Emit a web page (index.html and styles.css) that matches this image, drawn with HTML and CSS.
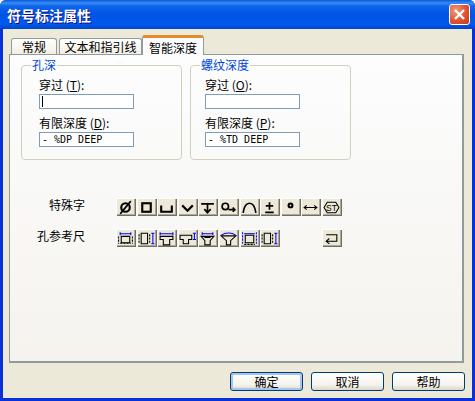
FILE: index.html
```html
<!DOCTYPE html>
<html lang="zh-CN">
<head>
    <meta charset="UTF-8">
    <meta name="viewport" content="width=device-width, initial-scale=1.0">
    <title>符号标注属性</title>
    <link rel="stylesheet" href="styles.css">
</head>
<body>
    <main class="window">
        <header class="titlebar">
            <h1 class="title">符号标注属性</h1>
            <button class="close-btn">
                <svg width="13" height="13" viewBox="0 0 13 13"><path d="M2 2L11 11M11 2L2 11"/></svg>
            </button>
        </header>

        <div class="client">
            <div class="tabs">
                <div class="tab tab-general">常规</div>
                <div class="tab tab-text">文本和指引线</div>
                <div class="tab tab-active">智能深度</div>
            </div>

            <section class="panel">
                <div class="groups">
                    <fieldset class="group">
                        <legend>孔深</legend>
                        <label class="field-label">穿过 (<u>T</u>):</label>
                        <div class="field"><span class="caret"></span></div>
                        <label class="field-label">有限深度 (<u>D</u>):</label>
                        <div class="field">- %DP DEEP</div>
                    </fieldset>
                    <fieldset class="group">
                        <legend>螺纹深度</legend>
                        <label class="field-label">穿过 (<u>O</u>):</label>
                        <div class="field"></div>
                        <label class="field-label">有限深度 (<u>P</u>):</label>
                        <div class="field">- %TD DEEP</div>
                    </fieldset>
                </div>

                <div class="symbols">
                    <div class="symbol-row">
                        <span class="row-label row-label-short">特殊字</span>
                        <div class="icon-row">
                            <button class="icon-btn"><svg viewBox="0 0 16 14"><circle class="ink" cx="8" cy="7" r="4"/><path class="ink thin" d="M3 13L13 1"/></svg></button>
                            <button class="icon-btn"><svg viewBox="0 0 16 14"><rect class="ink" x="4" y="3" width="8" height="8"/></svg></button>
                            <button class="icon-btn"><svg viewBox="0 0 16 14"><path class="ink" d="M3 5V11H13V5"/></svg></button>
                            <button class="icon-btn"><svg viewBox="0 0 16 14"><path class="ink" d="M3 5L8 10L13 5"/></svg></button>
                            <button class="icon-btn"><svg viewBox="0 0 16 14"><path class="ink thin" d="M2 3.500H14M8 3.500V12M5 8.500L8 12L11 8.500"/></svg></button>
                            <button class="icon-btn"><svg viewBox="0 0 16 14"><circle class="ink thin" cx="5" cy="6" r="3"/><path class="ink thin" d="M8 9H14M12 7L14 9L12 11"/></svg></button>
                            <button class="icon-btn"><svg viewBox="0 0 16 14"><path class="ink thin" d="M2 12C3 5 6 3 8 3C10 3 13 5 14 12"/></svg></button>
                            <button class="icon-btn"><svg viewBox="0 0 16 14"><path class="ink thin" d="M8 2V9M4.500 5.500H11.500M4 11.500H12"/></svg></button>
                            <button class="icon-btn"><svg viewBox="0 0 16 14"><circle class="ink" cx="8" cy="5" r="1.800"/></svg></button>
                            <button class="icon-btn"><svg viewBox="0 0 16 14"><path class="ink hair" d="M2 7H14M4.500 5L2 7L4.500 9M11.500 5L14 7L11.500 9"/></svg></button>
                            <button class="icon-btn"><svg viewBox="0 0 16 14"><path class="ink hair" d="M4 2H12L15 7L12 12H4L1 7Z"/><text class="icon-text" x="8" y="10">ST</text></svg></button>
                        </div>
                    </div>
                    <div class="symbol-row">
                        <span class="row-label">孔参考尺</span>
                        <div class="icon-row">
                            <button class="icon-btn"><svg viewBox="0 0 16 14"><path class="dim" d="M3 1V4M13 1V4M3 2.500H13"/><path class="ink hair dash" d="M1.500 5V12M14.500 5V12M3 11.500H13"/><path class="ink hair" d="M4 5H12V11H4Z"/></svg></button>
                            <button class="icon-btn"><svg viewBox="0 0 16 14"><path class="dim" d="M14 2V12M12.500 2H15.500M12.500 12H15.500"/><path class="ink hair dash" d="M1 3V11M11 3V11"/><path class="ink hair" d="M3 2H9V12H3Z"/></svg></button>
                            <button class="icon-btn"><svg viewBox="0 0 16 14"><path class="dim" d="M2 1V4M14 1V4M2 2.500H14"/><path class="ink hair" d="M2 5H14V8H11V13H5V8H2Z"/></svg></button>
                            <button class="icon-btn"><svg viewBox="0 0 16 14"><path class="dim" d="M14.500 2V8M13 2H16M13 8H16"/><path class="ink hair" d="M1 4H12V8H9V12H4V8H1Z"/></svg></button>
                            <button class="icon-btn"><svg viewBox="0 0 16 14"><path class="dim" d="M3 1V4M13 1V4M3 2.500H13"/><path class="ink hair" d="M2 5H14L10.500 9V13H5.500V9Z"/><path class="ink hair" d="M5 6H11"/></svg></button>
                            <button class="icon-btn"><svg viewBox="0 0 16 14"><path class="dim" d="M1 4C5 1 11 1 15 4"/><path class="ink hair" d="M1 4.500H15L10 9V13H6V9Z"/></svg></button>
                            <button class="icon-btn"><svg viewBox="0 0 16 14"><path class="dim dash" d="M1.500 1V13M14.500 1V13"/><path class="dim" d="M3 2.500H13"/><path class="ink hair" d="M4 4H12V11H4Z"/><path class="ink hair dash" d="M3 12.500H13"/></svg></button>
                            <button class="icon-btn"><svg viewBox="0 0 16 14"><path class="dim" d="M14 2V12M12.500 2H15.500M12.500 12H15.500"/><path class="ink hair dash" d="M1 3V11M11 3V11"/><path class="ink hair" d="M3 2H9V12H3Z"/></svg></button>
                        </div>
                        <button class="icon-btn return-btn"><svg viewBox="0 0 16 14"><path class="ink hair" d="M3 3.500H13V9.500H3M6 7L3 9.500L6 12"/></svg></button>
                    </div>
                </div>
            </section>

            <footer class="actions">
                <button class="btn btn-default">确定</button>
                <button class="btn">取消</button>
                <button class="btn">帮助</button>
            </footer>
        </div>
    </main>
</body>
</html>
```

FILE: styles.css
```css
* {
    box-sizing: border-box;
}

body {
    margin: 0;
    width: 475px;
    height: 401px;
    overflow: hidden;
    font-family: "Noto Sans CJK SC", "Liberation Sans", sans-serif;
    font-size: 12px;
    color: #000;
}

.window {
    display: flex;
    flex-direction: column;
    height: 401px;
    background: #0831d9;
    border-radius: 6px 6px 0 0;
}

.titlebar {
    display: flex;
    align-items: center;
    justify-content: space-between;
    height: 29px;
    padding: 0 5px 0 7px;
    border-radius: 6px 6px 0 0;
    background: linear-gradient(#0a58dc 0, #3a8cf3 3px, #0f66ea 6px, #0054e3 14px, #0058ee 24px, #0046c8 29px);
}

.title {
    margin: 0;
    font-size: 14px;
    font-weight: bold;
    line-height: 18px;
    color: #fff;
    text-shadow: 1px 1px 0 #0f1089;
}

.close-btn {
    display: flex;
    align-items: center;
    justify-content: center;
    width: 21px;
    height: 21px;
    padding: 0;
    border: 1px solid #fff;
    border-radius: 3px;
    background: radial-gradient(circle at 30% 30%, #ef9b7d, #e2532e 55%, #c23a14);
}

.close-btn path {
    fill: none;
    stroke: #fff;
    stroke-width: 2.4;
}

.client {
    flex: 1;
    margin: 0 3px 3px 3px;
    padding: 6px 8px 0 6px;
    background: #ece9d8;
}

.tabs {
    display: flex;
    align-items: flex-end;
    height: 20px;
    padding-left: 2px;
    position: relative;
    z-index: 1;
    margin-bottom: -1px;
}

.tab {
    height: 16px;
    line-height: 15px;
    text-align: center;
    border: 1px solid #919b9c;
    border-bottom: 0;
    border-radius: 3px 3px 0 0;
    background: linear-gradient(#fff, #f1efe4);
    margin-bottom: 1px;
}

.tab-general {
    width: 46px;
    margin-right: 2px;
}

.tab-text {
    width: 83px;
}

.tab-active {
    width: 62px;
    height: 20px;
    line-height: 19px;
    margin-bottom: 0;
    border-top: 3px solid #e68b2c;
    background: #fcfcfe;
}

.panel {
    height: 309px;
    padding: 3px 11px 0 11px;
    border: 1px solid #919b9c;
    border-right-width: 2px;
    border-bottom-width: 2px;
    background: linear-gradient(#fdfdfe, #f4f3ee);
}

.groups {
    display: flex;
    gap: 8px;
}

.group {
    width: 161px;
    height: 102px;
    margin: 0;
    padding: 5px 0 0 17px;
    border: 1px solid #d0d0bf;
    border-radius: 4px;
}

.group + .group {
    padding-left: 14px;
}

.group legend {
    margin-left: -8px;
    padding: 0 1px;
    line-height: 14px;
    color: #0046d5;
}

.group + .group legend {
    margin-left: -5px;
}

.field-label {
    display: block;
    height: 14px;
    line-height: 14px;
    margin-top: 1px;
}

.field + .field-label {
    margin-top: 7px;
}

.field {
    display: flex;
    align-items: center;
    width: 95px;
    height: 15px;
    margin-top: 2px;
    padding-left: 2px;
    border: 1px solid #7f9db9;
    background: #fff;
    font-family: "DejaVu Sans Mono", "Liberation Mono", monospace;
    font-size: 10px;
    white-space: pre;
}

.caret {
    width: 1px;
    height: 11px;
    background: #000;
}

.symbols {
    display: flex;
    flex-direction: column;
    gap: 13px;
    margin-top: 38px;
    padding-left: 16px;
}

.symbol-row {
    display: flex;
    align-items: flex-start;
    height: 18px;
}

.row-label {
    width: 79px;
    line-height: 14px;
}

.row-label-short {
    padding-left: 12px;
}

.icon-row {
    display: flex;
    gap: 1.6px;
}

.icon-btn {
    display: block;
    width: 19px;
    height: 17px;
    padding: 1px 0 0 1px;
    border: 0;
    background: #ece9d8;
    box-shadow: inset 1px 1px 0 #fff, inset -1px -1px 0 #aca899, 1px 1px 0 #716f64;
}

.icon-btn svg {
    display: block;
    width: 17px;
    height: 15px;
}

.return-btn {
    margin-left: 43px;
}

.ink {
    fill: none;
    stroke: #000;
    stroke-width: 2;
}

.thin {
    stroke-width: 1.6;
}

.hair {
    stroke-width: 1;
}

.dim {
    fill: none;
    stroke: #0000ff;
    stroke-width: 1;
}

.dash {
    stroke-dasharray: 2 1;
}

.icon-text {
    font-family: "Liberation Sans", sans-serif;
    font-size: 8px;
    text-anchor: middle;
}

.actions {
    display: flex;
    justify-content: flex-end;
    gap: 8px;
    margin-right: -1px;
    padding: 9px 0 0 0;
}

.btn {
    width: 73px;
    height: 19px;
    padding: 0;
    border: 1px solid #003c74;
    border-radius: 3px;
    background: linear-gradient(#fff, #f4f3ec 70%, #dcd8c8);
    font: inherit;
    line-height: 15px;
}

.btn-default {
    box-shadow: inset 0 0 0 2px #a6c4f0;
}
```
